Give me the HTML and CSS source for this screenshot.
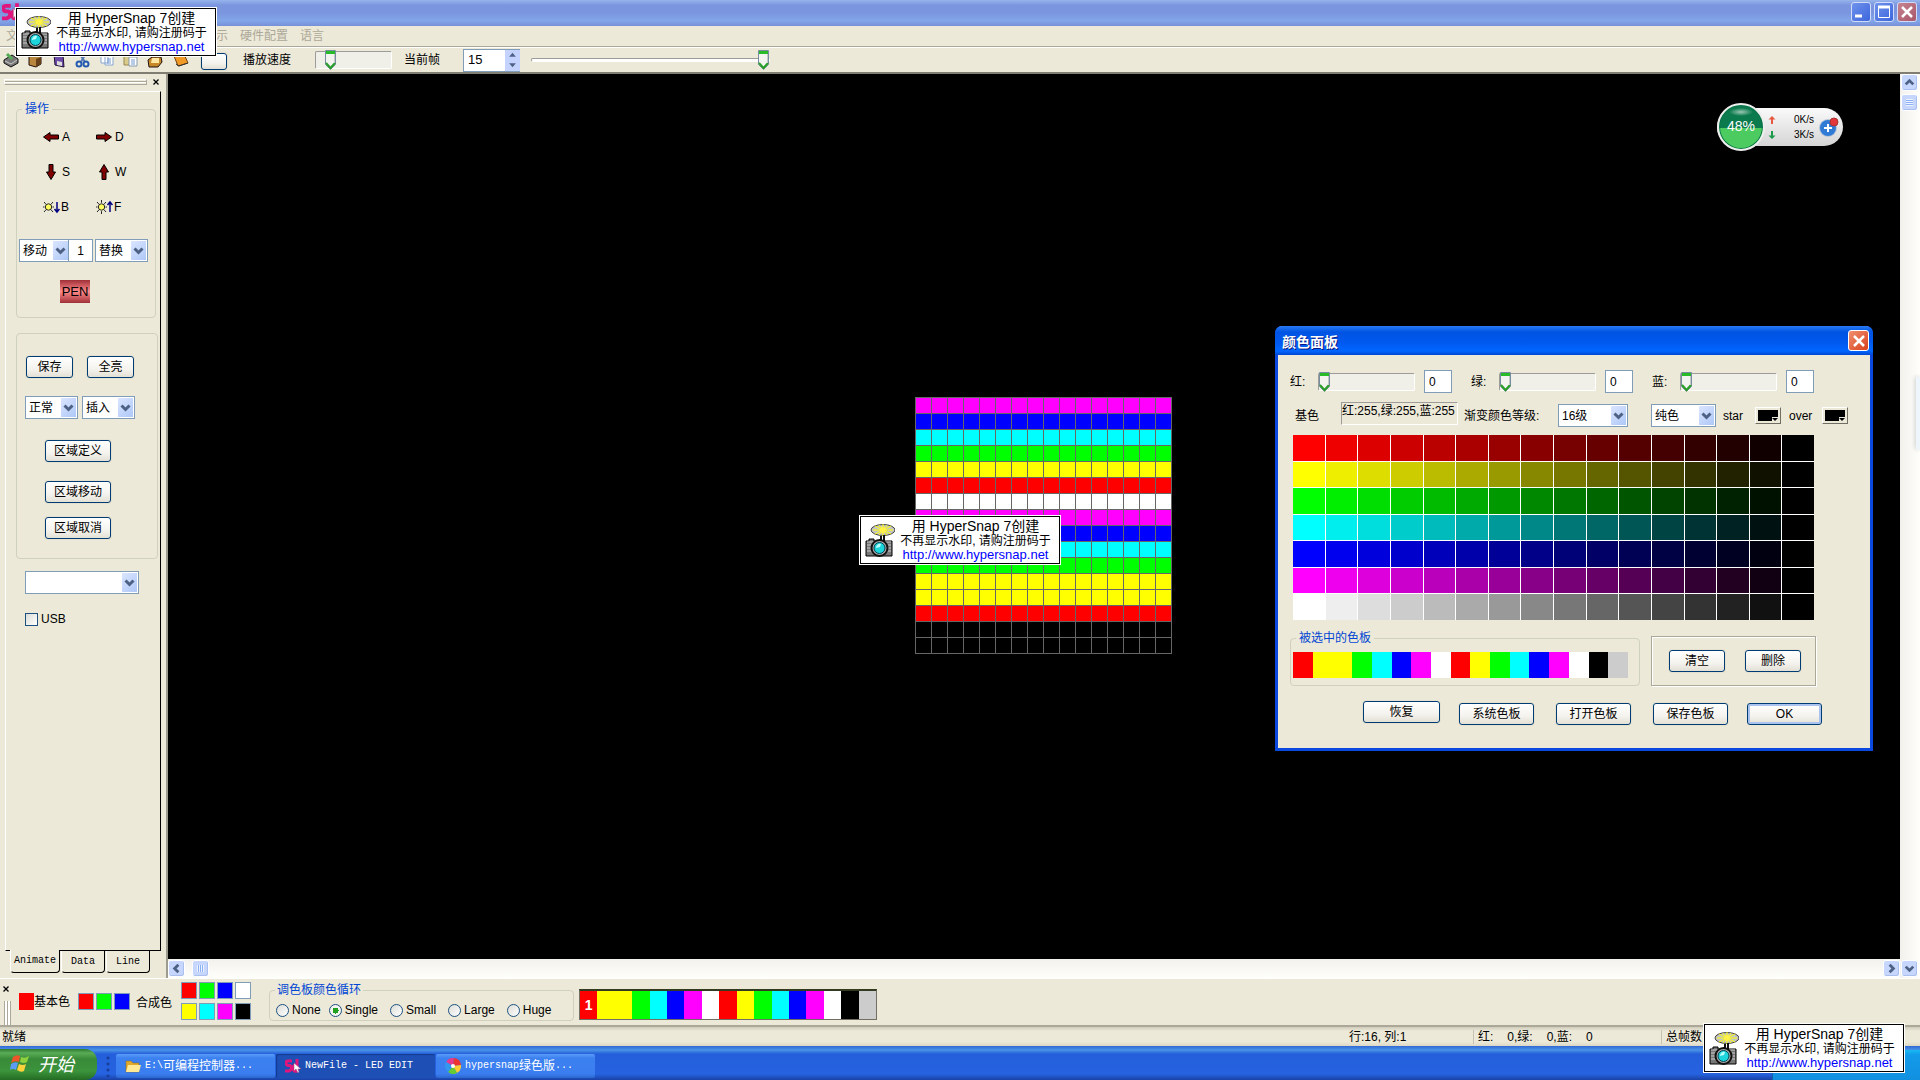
FILE: index.html
```html
<!DOCTYPE html>
<html lang="zh-CN">
<head>
<meta charset="utf-8">
<title>NewFile - LED EDIT</title>
<link rel="stylesheet" href="styles.css">
</head>
<body>
<svg class="defs" aria-hidden="true">
  <defs>
    <symbol id="camera" viewBox="0 0 30 36">
      <ellipse cx="18" cy="8" rx="12" ry="5.500" fill="#c4c4c4" stroke="#444"/>
      <path d="M18 2v12M10 4l16 8M26 4L10 12M8 8h20M14 3l8 10M22 3l-8 10" stroke="#ff0"/>
      <circle cx="18" cy="8" r="3" fill="#fff04a"/>
      <path d="M16 14v6M19 13v7" stroke="#111" stroke-width="2"/>
      <path d="M1 19h3v-2h5v2h18v15H1z" fill="#777" stroke="#000"/>
      <path d="M2 20h24M2 23h5M2 26h5M2 29h5M22 23h4M22 26h4M22 29h4" stroke="#ccc"/>
      <circle cx="14.500" cy="26" r="8" fill="#aaa" stroke="#111" stroke-width="2"/>
      <circle cx="14.500" cy="26" r="5.500" fill="#1cd6dc" stroke="#045"/>
      <path d="M11 26a4 4 0 0 1 5-4l-1 3z" fill="#bff"/>
    </symbol>
    <symbol id="logo" viewBox="0 0 16 16">
      <path d="M7 3H3Q1 3 1 5t2 2.500h2Q6.500 8 6.500 10T4 13H0M12 1v12M12 8q-4-2-4 2t4 3" fill="none" stroke="#e0167c" stroke-width="3"/>
      <path d="M9 5v8l2-2 2 4 1-1-1-3h3z" fill="#fff" stroke="#a04070" stroke-width=".5"/>
    </symbol>
    <symbol id="arrow" viewBox="0 0 16 10">
      <path d="M.5 5L7 .5V3h8.500v4H7v2.500z" fill="#800000" stroke="#000"/>
    </symbol>
    <symbol id="varrow" viewBox="0 0 10 16">
      <path d="M5 .5L.5 8H3v7.500h4V8h2.500z" fill="#800000" stroke="#000"/>
    </symbol>
    <symbol id="sun" viewBox="0 0 17 14">
      <path d="M5.500 0v14M0 7h11M1 2l9 10M10 2L1 12" stroke="#222"/>
      <circle cx="5.500" cy="7" r="4.200" fill="#ece9d8"/>
      <circle cx="5.500" cy="7" r="3.200" fill="#ffff60" stroke="#222"/>
      <path d="M14 2v10M11.500 5L14 2l2.500 3" fill="none" stroke="#000080" stroke-width="1.500"/>
    </symbol>
    <symbol id="sundown" viewBox="0 0 17 14">
      <path d="M0 7h11M1 2l9 10M10 2L1 12" stroke="#222"/>
      <circle cx="5.500" cy="7" r="4.200" fill="#ece9d8"/>
      <circle cx="5.500" cy="7" r="3.200" fill="#ffff60" stroke="#222"/>
      <path d="M14 2v10M11.500 9l2.500 3 2.500-3" fill="none" stroke="#000080" stroke-width="1.500"/>
    </symbol>
    <symbol id="x" viewBox="0 0 16 16"><path d="M3 3l10 10M13 3L3 13" stroke="currentColor" stroke-width="2.500"/></symbol>
    <symbol id="chev" viewBox="0 0 16 16"><path d="M4 6l4 4 4-4" fill="none" stroke="#4d6185" stroke-width="3"/></symbol>
  </defs>
</svg>

<header class="title">
  <svg class="title-logo"><use href="#logo"/></svg>
  <div class="caption-buttons">
    <button class="cap" aria-label="最小化"><svg viewBox="0 0 16 16"><path d="M2 12h7" stroke="#fff" stroke-width="3"/></svg></button>
    <button class="cap" aria-label="最大化"><svg viewBox="0 0 16 16"><path d="M2.500 3h11v10.500h-11z" fill="none" stroke="#fff"/><path d="M2 3h12" stroke="#fff" stroke-width="3"/></svg></button>
    <button class="cap cap-close" aria-label="关闭"><svg><use href="#x"/></svg></button>
  </div>
</header>
<nav class="menu"><span>文</span><span class="menu-view">示</span><span>硬件配置</span><span>语言</span></nav>
<div class="toolbar">
  <div class="tools">
    <svg viewBox="0 0 16 16"><path d="M1 8l8-5 6 4v4l-7 4-7-4z" fill="#777" stroke="#111"/><path d="M2 9l6 3 6-4" fill="none" stroke="#ccc"/><path d="M4 2l5 5" stroke="#5a5" stroke-width="3"/></svg>
    <svg viewBox="0 0 16 16"><path d="M2 4l8-2 4 3v7l-5 3-7-2z" fill="#b8863c" stroke="#211"/><path d="M9 7v8l5-3V5z" fill="#664018"/></svg>
    <svg viewBox="0 0 16 16"><path d="M3 2l9 1 1 12-9-2z" fill="#6b4aa8" stroke="#213"/><path d="M6 9l5 1v4l-5-1z" fill="#ddd"/></svg>
    <svg viewBox="0 0 16 16"><path d="M4 1l6 9M11 1L6 10" stroke="#5779b5" stroke-width="2"/><circle cx="4" cy="12" r="2.500" fill="none" stroke="#245bb0" stroke-width="2"/><circle cx="11" cy="12" r="2.500" fill="none" stroke="#245bb0" stroke-width="2"/></svg>
    <svg viewBox="0 0 16 16"><path d="M2 1h7v10H2zM6 4h8v9H6z" fill="#fff" stroke="#87a5cf"/><path d="M8 7h4M8 9h4M8 11h4" stroke="#7298cf"/></svg>
    <svg viewBox="0 0 16 16"><path d="M1 2h9v11H1z" fill="#d8cb8c" stroke="#99884c"/><path d="M6 5h8v9H6z" fill="#fff" stroke="#89a"/><path d="M8 8h4M8 10h4M8 12h4" stroke="#7298cf"/></svg>
    <svg viewBox="0 0 16 16"><path d="M1 8l4-3h9l1 5-4 5H2z" fill="#c68a28" stroke="#211"/><path d="M5 6h7v5H4z" fill="#ffe6a1"/></svg>
    <svg class="book" viewBox="0 0 16 16"><path d="M1 4l10-2 4 9-10 3z" fill="#f29a28" stroke="#73400c"/><path d="M3 12l3 2 9-3" fill="none" stroke="#333"/></svg>
    <button class="btn tool-button" aria-label="播放"></button>
  </div>
  <label class="speed-label" for="speed">播放速度</label>
  <input class="slider speed" id="speed" type="range" min="0" max="100" value="14">
  <label class="frame-label" for="frame">当前帧</label>
  <div class="spin">
    <input id="frame" type="text" value="15">
    <svg viewBox="0 0 15 22"><path d="M4 7l3.500-4L11 7zM4 14l3.500 4 3.500-4z" fill="#4d6185"/></svg>
  </div>
  <input class="slider thin frame-slider" type="range" min="0" max="100" value="100" aria-label="当前帧">
</div>

<main class="main">
  <aside class="side">
    <div class="grip-row"><div class="grip"></div><button class="mini-x" aria-label="关闭"><svg><use href="#x"/></svg></button></div>
    <div class="page">
      <fieldset class="group ops">
        <legend>操作</legend>
        <div class="keys">
          <span><svg class="ar"><use href="#arrow"/></svg>A</span><span><svg class="ar flip"><use href="#arrow"/></svg>D</span>
          <span><svg class="va flip"><use href="#varrow"/></svg>S</span><span><svg class="va"><use href="#varrow"/></svg>W</span>
          <span><svg class="sn"><use href="#sundown"/></svg>B</span><span><svg class="sn"><use href="#sun"/></svg>F</span>
        </div>
        <div class="move-row">
          <select class="combo" aria-label="方式"><option>移动</option></select>
          <input class="box step" type="text" value="1" aria-label="步长">
          <select class="combo" aria-label="模式"><option>替换</option></select>
        </div>
        <button class="pen">PEN</button>
      </fieldset>
      <div class="group edit">
        <div class="pair"><button class="btn">保存</button><button class="btn">全亮</button></div>
        <div class="combos">
          <select class="combo" aria-label="显示方式"><option>正常</option></select>
          <select class="combo" aria-label="编辑方式"><option>插入</option></select>
        </div>
        <div class="areas"><button class="btn">区域定义</button><button class="btn area-move">区域移动</button><button class="btn">区域取消</button></div>
      </div>
      <select class="combo device" aria-label="设备"><option></option></select>
      <label class="usb"><input type="checkbox">USB</label>
    </div>
    <div class="tabs"><button class="tab on">Animate</button><button class="tab">Data</button><button class="tab">Line</button></div>
  </aside>
  <section class="work">
    <div class="canvas"><div class="led" id="led"></div></div>
    <div class="vbar">
      <button class="sb" aria-label="向上"><svg class="up"><use href="#chev"/></svg></button>
      <div class="sb vthumb"></div>
      <button class="sb vdown" aria-label="向下"><svg><use href="#chev"/></svg></button>
    </div>
    <div class="hbar">
      <button class="sb" aria-label="向左"><svg class="left"><use href="#chev"/></svg></button>
      <div class="sb hthumb"></div>
      <button class="sb hright" aria-label="向右"><svg class="right"><use href="#chev"/></svg></button>
    </div>
  </section>
</main>

<section class="palette">
  <div class="pal-handle"><button class="mini-x" aria-label="关闭"><svg><use href="#x"/></svg></button><div class="vgrip"></div></div>
  <div class="basic"><i class="sw red bare"></i><span>基本色</span></div>
  <div class="rgb"><i class="sw red"></i><i class="sw green"></i><i class="sw blue"></i></div>
  <span class="mix-label">合成色</span>
  <div class="mix">
    <i class="sw red"></i><i class="sw green"></i><i class="sw blue"></i><i class="sw white"></i>
    <i class="sw yellow"></i><i class="sw cyan"></i><i class="sw magenta"></i><i class="sw black"></i>
  </div>
  <fieldset class="group cycle">
    <legend>调色板颜色循环</legend>
    <div class="radios">
      <label><input type="radio" name="cycle">None</label>
      <label><input type="radio" name="cycle" checked>Single</label>
      <label><input type="radio" name="cycle">Small</label>
      <label><input type="radio" name="cycle">Large</label>
      <label><input type="radio" name="cycle">Huge</label>
    </div>
  </fieldset>
  <div class="strip framed" id="stripBar"></div>
</section>

<footer class="status">
  <span class="ready">就绪</span>
  <span class="cell pos">行:16, 列:1</span>
  <span class="cell rgbval"><span>红:</span><span>0,绿:</span><span>0,蓝:</span><span>0</span></span>
  <span class="cell frames">总帧数</span>
</footer>

<div class="taskbar">
  <button class="start">
    <svg viewBox="0 0 20 20"><path d="M3 4q4-3 7-1L9 9Q5 7 1 10z" fill="#f0552a"/><path d="M11 4q4 2 8-1l-2 6q-3 2-7 0z" fill="#8fd13c"/><path d="M1 11q4-3 7-1l-2 7q-3-2-6 0z" fill="#5c9cf5"/><path d="M9 11q4 2 7 0l-2 7q-3 2-7-1z" fill="#ffd23c"/></svg>
    <span>开始</span>
  </button>
  <div class="dots"></div>
  <button class="task"><svg viewBox="0 0 16 16"><path d="M1 3h5l2 2h6v9H1z" fill="#e0a92c" stroke="#8a6414" stroke-width=".5"/><path d="M1 14L3 7h13l-2 7z" fill="#ffe994"/></svg><span class="mono">E:\</span>可编程控制器<span class="mono">...</span></button>
  <button class="task active"><svg><use href="#logo"/></svg><span class="mono">NewFile - LED EDIT</span></button>
  <button class="task"><svg viewBox="0 0 16 16"><path d="M8 8L1 4A8 8 0 0 1 9 0z" fill="#e83a8c"/><path d="M8 8l1-8a8 8 0 0 1 7 7z" fill="#e33"/><path d="M8 8l8-1a8 8 0 0 1-4 8z" fill="#fc3"/><path d="M8 8l4 7a8 8 0 0 1-9-1z" fill="#6c3"/><path d="M8 8l-5 6A8 8 0 0 1 1 4z" fill="#39e"/><circle cx="8" cy="8" r="2" fill="#fff"/></svg><span class="mono">hypersnap</span>绿色版<span class="mono">...</span></button>
  <div class="tray"></div>
</div>

<div class="meter">
  <div class="ball">48%</div>
  <div class="arrows"><svg viewBox="0 0 8 8"><path d="M4 0l3.500 3.500H5V8H3V3.500H.5z" fill="#e8573f"/></svg><svg viewBox="0 0 8 8"><path d="M4 8L.5 4.500H3V0h2v4.500h2.500z" fill="#1f9a4c"/></svg></div>
  <div class="rates"><span>0K/s</span><span>3K/s</span></div>
  <svg class="plus" viewBox="0 0 20 20"><circle cx="9" cy="11" r="9" fill="#b8c4d4"/><circle cx="9" cy="11" r="8" fill="#2f7bd6"/><path d="M9 7v8M5 11h8" stroke="#fff" stroke-width="2"/><circle cx="15" cy="5" r="4" fill="#e2383c" stroke="#a33"/></svg>
</div>
<div class="edge-tip"></div>

<section class="dialog" role="dialog" aria-label="颜色面板">
  <header class="dlg-title"><h2>颜色面板</h2><button class="dlg-close" aria-label="关闭"><svg><use href="#x"/></svg></button></header>
  <div class="dlg-body">
    <div class="channels">
      <div><label for="r">红:</label><input class="slider" type="range" value="0" aria-label="红"><input class="box" id="r" type="text" value="0"></div>
      <div><label for="g">绿:</label><input class="slider" type="range" value="0" aria-label="绿"><input class="box" id="g" type="text" value="0"></div>
      <div><label for="b">蓝:</label><input class="slider" type="range" value="0" aria-label="蓝"><input class="box" id="b" type="text" value="0"></div>
    </div>
    <div class="options">
      <span class="base-label">基色</span>
      <output class="sunken">红:255,绿:255,蓝:255</output>
      <label class="level-label" for="level">渐变颜色等级:</label>
      <select class="combo level" id="level"><option>16级</option></select>
      <select class="combo solid" aria-label="颜色类型"><option>纯色</option></select>
      <span class="star">star</span><button class="pick" aria-label="star"><i></i></button>
      <span class="over">over</span><button class="pick" aria-label="over"><i></i></button>
    </div>
    <div class="shades" id="shades"></div>
    <div class="chosen">
      <fieldset class="group chosen-box"><legend>被选中的色板</legend><div class="strip" id="stripDialog"></div></fieldset>
      <div class="etched"><button class="btn">清空</button><button class="btn">删除</button></div>
    </div>
    <div class="actions">
      <button class="btn restore">恢复</button><button class="btn">系统色板</button><button class="btn">打开色板</button><button class="btn">保存色板</button><button class="btn ok">OK</button>
    </div>
  </div>
</section>

<div class="mark mark-tl"><svg><use href="#camera"/></svg><div><b>用 HyperSnap 7创建</b><span>不再显示水印, 请购注册码于</span><a href="http://www.hypersnap.net">http://www.hypersnap.net</a></div></div>
<div class="mark mark-mid"><svg><use href="#camera"/></svg><div><b>用 HyperSnap 7创建</b><span>不再显示水印, 请购注册码于</span><a href="http://www.hypersnap.net">http://www.hypersnap.net</a></div></div>
<div class="mark mark-br"><svg><use href="#camera"/></svg><div><b>用 HyperSnap 7创建</b><span>不再显示水印, 请购注册码于</span><a href="http://www.hypersnap.net">http://www.hypersnap.net</a></div></div>
<script src="app.js"></script>
</body>
</html>
```
FILE: styles.css
```css
* { box-sizing: border-box; }
body {
  margin: 0;
  height: 100vh;
  display: flex;
  flex-direction: column;
  position: relative;
  overflow: hidden;
  background: #ece9d8;
  color: #000;
  font: 12px/14px "Liberation Sans", "Noto Sans CJK SC", sans-serif;
}
button, input, select { font: inherit; color: inherit; margin: 0; padding: 0; }
button { border: 0; background: none; }
svg { display: block; flex: none; }
.defs { position: absolute; width: 0; height: 0; }
.mono { font: 10px/14px "Liberation Mono", monospace; }

/* shared controls */
.btn {
  height: 22px;
  border: 1px solid #003c74;
  border-radius: 3px;
  background: linear-gradient(#fff, #f4f3ee 60%, #e3e0d5);
  box-shadow: 0 0 0 1px #e6e1cf;
}
.box { border: 1px solid #7f9db9; background: #fff; height: 23px; border-radius: 0; }
.combo {
  appearance: none;
  height: 23px;
  border: 1px solid #7f9db9;
  border-radius: 0;
  padding: 0 18px 0 3px;
  background:
    url("data:image/svg+xml,%3Csvg xmlns='http://www.w3.org/2000/svg' width='15' height='19'%3E%3Cpath d='M3.500 7.500l4 4 4-4' fill='none' stroke='%234d6185' stroke-width='3'/%3E%3C/svg%3E") right 1px top 1px no-repeat,
    linear-gradient(135deg, #dbe5ff, #aec8f7) right 1px top 1px / 15px 19px no-repeat,
    #fff;
}
.slider { appearance: none; height: 22px; background: none; }
.slider::-webkit-slider-runnable-track {
  height: 18px;
  border: 1px solid #fff;
  border-top-color: #9d9c99;
  border-left-color: #9d9c99;
  border-radius: 2px;
  background: #f0f0e8;
}
.slider::-webkit-slider-thumb {
  appearance: none;
  width: 11px;
  height: 20px;
  margin-top: -2px;
  background: url("data:image/svg+xml,%3Csvg xmlns='http://www.w3.org/2000/svg' width='11' height='20'%3E%3Cpath d='M.5.5h10v14l-5 5-5-5z' fill='%23f3f3ef' stroke='%23778c9e'/%3E%3Cpath d='M1 1h9v3H1z' fill='%2328bb28'/%3E%3Cpath d='M1 13l4.500 5 4.500-5' fill='none' stroke='%2328a028' stroke-width='2'/%3E%3Cpath d='M9.500 4v9' stroke='%23c4c8c8'/%3E%3C/svg%3E") no-repeat;
}
.slider.thin::-webkit-slider-runnable-track { height: 4px; background: #fff; }
.slider.thin::-webkit-slider-thumb { margin-top: -9px; }
.group { margin: 0; padding: 0; min-width: 0; border: 1px solid #d0d0bf; border-radius: 4px; }
.group legend { color: #0046d5; padding: 0 3px; margin-left: 5px; line-height: 14px; }
.mini-x { width: 10px; height: 10px; }
.mini-x svg { width: 8px; height: 8px; }

/* window frame */
.title { height: 26px; flex: none; display: flex; justify-content: space-between; padding: 2px 1px 2px 2px; background: linear-gradient(#96b4ec, #7b96df 20%, #7b96df 50%, #82a6e8 80%, #7690d8); }
.title-logo { width: 20px; height: 20px; }
.caption-buttons { display: flex; gap: 3px; padding-right: 2px; }
.cap { width: 20px; height: 20px; border: 1px solid #d0dcf8; border-radius: 3px; background: linear-gradient(135deg, #6f92ec, #3c66dc); color: #fff; display: grid; place-items: center; }
.cap svg { width: 16px; height: 16px; }
.cap-close { background: linear-gradient(135deg, #c68490, #a8566a); }
.menu { height: 21px; flex: none; display: flex; align-items: center; gap: 12px; padding: 0 6px; color: #aca899; border-bottom: 1px solid #aca899; }
.menu-view { margin-left: 186px; }
.toolbar { height: 27px; flex: none; display: flex; align-items: center; border-top: 1px solid #fff; border-bottom: 2px solid #807e73; }
.tools { display: flex; align-items: center; gap: 8px; width: 243px; padding-left: 3px; }
.tools svg { width: 16px; height: 16px; }
.tools .book { margin-left: 2px; }
.tool-button { width: 26px; height: 17px; margin: 3px 0 0 4px; }
.speed-label { width: 72px; }
.speed { width: 77px; }
.frame-label { margin-left: 12px; width: 59px; }
.spin { width: 57px; height: 23px; display: flex; border: 1px solid #7f9db9; border-right: 0; background: #fff; }
.spin input { width: 41px; border: 0; padding-left: 4px; background: none; font-size: 13px; }
.spin svg { width: 15px; height: 21px; background: #c3d3fd; }
.frame-slider { width: 239px; margin-left: 11px; }
.main { flex: 1; min-height: 0; display: flex; }

/* side panel */
.side { width: 168px; flex: none; display: flex; flex-direction: column; border-right: 2px solid #9d9b8f; padding-bottom: 4px; }
.grip-row { height: 17px; display: flex; align-items: center; gap: 5px; padding: 0 4px 2px; }
.grip { width: 144px; height: 6px; border: 1px solid #fff; border-right-color: #aca899; border-bottom-color: #aca899; background: linear-gradient(#aca899 50%, #fff 50%) 0 1px / 100% 2px no-repeat; }
.page { flex: 1; margin: 0 5px; border: 1px solid #fff; border-right-color: #000; border-bottom-color: #000; display: flex; flex-direction: column; align-items: flex-start; }
.ops { width: 140px; margin: 10px 0 0 10px; padding: 3px 0 14px; }
.keys { display: grid; grid-template-columns: 53px 53px; grid-auto-rows: 35px; padding-left: 26px; }
.keys span { display: flex; align-items: center; gap: 3px; }
.ar { width: 16px; height: 10px; }
.va { width: 10px; height: 16px; margin: 0 3px; }
.sn { width: 17px; height: 14px; }
.keys span:nth-child(n+5) { gap: 1px; }
.flip { transform: rotate(180deg); }
.move-row { display: flex; margin: 15px 0 18px 2px; }
.move-row .combo { width: 51px; }
.move-row .step { width: 25px; margin: 0 2px 0 -2px; text-align: center; }
.move-row .combo:last-child { width: 53px; }
.pen { display: block; width: 30px; height: 23px; margin-left: 43px; font-size: 13px; background: linear-gradient(#a03038, #ff8a8a 50%, #a03038); }
.edit { width: 142px; margin: 15px 0 0 10px; padding: 22px 0 19px; }
.pair { display: flex; gap: 14px; margin-left: 9px; }
.pair .btn { width: 47px; }
.combos { display: flex; gap: 4px; margin: 18px 0 21px 8px; }
.combos .combo { width: 53px; }
.areas { display: flex; flex-direction: column; gap: 14px; margin-left: 28px; }
.areas .btn { width: 66px; }
.area-move { margin-top: 5px; }
.device { width: 114px; margin: 12px 0 18px 19px; }
.usb { display: flex; align-items: center; gap: 3px; margin-left: 19px; }
.usb input { appearance: none; width: 13px; height: 13px; border: 1px solid #1c5180; background: linear-gradient(135deg, #dcdcd7, #fff); }
.tabs { display: flex; gap: 1px; padding-left: 10px; height: 23px; }
.tab { width: 44px; height: 22px; font: 10px/14px "Liberation Mono", monospace; border: 1px solid #000; border-top: 0; border-left-color: #fff; border-radius: 0 0 4px 4px; }
.tab.on { width: 50px; height: 23px; margin-top: -1px; background: #ece9d8; }

/* work area */
.work { flex: 1; min-width: 0; display: grid; grid-template: 1fr 19px / 1fr 20px; background: #ece9d8; }
.canvas { background: #000; display: flex; align-items: center; justify-content: center; padding: 18px 0 0 18px; }
.led { display: grid; grid-template-columns: repeat(16, 15px); grid-auto-rows: 15px; gap: 1px; padding: 1px; background: #666; }
.vbar { grid-row: 1 / 3; grid-column: 2; display: flex; flex-direction: column; padding: 0 2px 1px 1px; background: linear-gradient(90deg, #f3f1ec, #fefefb); }
.hbar { display: flex; padding: 1px 0; background: linear-gradient(#f3f1ec, #fefefb); }
.sb { width: 17px; height: 17px; flex: none; border: 1px solid #fff; border-radius: 3px; background: #c6d6fd; box-shadow: inset -1px -1px #a9bff0; }
.sb svg { width: 15px; height: 15px; }
.up { transform: rotate(180deg); }
.left { transform: rotate(90deg); }
.right { transform: rotate(-90deg); }
.vthumb { margin-top: 3px; background: repeating-linear-gradient(#eef4fe 0 1px, #8cb0f8 1px 2px) 4px 4px / 7px 7px no-repeat, #c6d6fd; }
.hthumb { margin-left: 7px; background: repeating-linear-gradient(90deg, #eef4fe 0 1px, #8cb0f8 1px 2px) 4px 4px / 7px 7px no-repeat, #c6d6fd; }
.vdown { margin-top: auto; }
.hright { margin-left: auto; }

/* palette bar */
.palette { height: 49px; flex: none; display: flex; align-items: flex-start; border-top: 1px solid #fff; border-bottom: 2px solid #aca899; }
.pal-handle { width: 19px; padding: 4px 2px; }
.vgrip { width: 7px; height: 24px; margin: 4px 2px; border: solid #aca899; border-width: 0 1px; background: linear-gradient(90deg, #fff 2px, #aca899 2px 3px, #fff 3px); }
.sw { display: block; width: 16px; height: 17px; border: 1px solid #7f9db9; }
.bare { border: 0; }
.red { background: #f00; } .green { background: #0f0; } .blue { background: #00f; } .white { background: #fff; }
.yellow { background: #ff0; } .cyan { background: #0ff; } .magenta { background: #f0f; } .black { background: #000; }
.basic { display: flex; align-items: center; width: 59px; padding-top: 14px; white-space: nowrap; }
.basic .sw { width: 15px; }
.rgb { display: flex; gap: 2px; width: 58px; padding-top: 14px; }
.mix-label { padding-top: 17px; width: 45px; }
.mix { display: grid; grid-template-columns: repeat(4, 16px); gap: 4px 2px; padding-top: 3px; width: 88px; }
.cycle { width: 305px; margin-top: 4px; padding-bottom: 1px; }
.cycle legend { padding: 0 2px; }
.radios { display: flex; gap: 12px; padding: 6px 0 2px 6px; }
.radios label { display: flex; align-items: center; gap: 3px; }
.radios label:first-child { margin-right: -4px; }
.radios input { appearance: none; width: 13px; height: 13px; border: 1px solid #1c5180; border-radius: 50%; background: linear-gradient(135deg, #dcdcd7, #fff); }
.radios input:checked { background: radial-gradient(circle, #21a121 3px, #f4f4f0 3px); }
.strip { display: grid; grid-template-columns: repeat(17, 1fr); }
.strip i { display: block; color: #fff; font: bold 14px/28px "Liberation Sans", sans-serif; text-align: center; }
.framed { width: 298px; height: 31px; margin: 10px 0 0 5px; border: 1px solid #716f64; border-top: 2px solid #323a20; }

/* status */
.status { height: 19px; flex: none; display: flex; align-items: center; padding: 0 15px 0 2px; background: linear-gradient(#cfccba, #ece9d8 4px, #ece9d8 15px, #dcd8c4); }
.ready { flex: 1; }
.pos { width: 124px; }
.rgbval { width: 188px; display: flex; gap: 14px; border-left: 1px solid #c5c2b2; padding-left: 4px; }
.frames { width: 244px; border-left: 1px solid #c5c2b2; padding-left: 4px; }

/* taskbar */
.taskbar { height: 34px; flex: none; display: flex; align-items: flex-end; background: linear-gradient(#3168d5, #4993e6 4px, #245edb 8px, #2663e0 28px, #1941a5); color: #fff; }
.start { width: 97px; height: 31px; display: flex; align-items: center; gap: 8px; padding: 0 0 3px 10px; border-radius: 0 12px 12px 0; background: linear-gradient(#2f7a2f, #5aac56 4px, #388a38 10px, #3c943c 22px, #236b23); font: italic 18px/22px "Noto Sans CJK SC", sans-serif; }
.start svg { width: 20px; height: 20px; }
.dots { width: 19px; height: 22px; margin-bottom: 3px; background: radial-gradient(circle, #173f9c 1px, transparent 2px) 8px 0 / 6px 6px; background-clip: content-box; padding: 0 4px 0 8px; }
.task { width: 159px; height: 24px; margin: 0 1px 2px 0; display: flex; align-items: center; padding-left: 9px; border-radius: 2px; white-space: pre; background: linear-gradient(#5a9cf8, #3c81f0 4px, #3a7df0 20px, #2b66cc); }
.task svg { width: 16px; height: 16px; margin-right: 4px; }
.task.active { background: #1e4fb5; box-shadow: inset 1px 1px 1px #123a8c; }
.tray { width: 148px; height: 30px; margin-left: auto; border-left: 1px solid #16a; background: linear-gradient(#19b9f2, #129bea 5px, #1290e0); }

/* floating traffic meter */
.meter { position: absolute; top: 108px; right: 77px; width: 126px; height: 38px; display: flex; align-items: center; border-radius: 19px; background: linear-gradient(#fafafa, #d5d5d5); font-size: 10px; }
.ball { width: 48px; height: 48px; margin: -5px 3px -5px 0; border: 2px solid #eee; border-radius: 50%; box-shadow: inset 0 0 0 1px #0a7348; background: radial-gradient(ellipse 12px 4px at 50% 7px, #9cc8b4, transparent), linear-gradient(#0b7a4c 52%, #4ccb60 52%); color: #fff; font-size: 14px; line-height: 42px; text-align: center; }
.arrows { display: grid; gap: 7px; }
.arrows svg { width: 8px; height: 8px; }
.rates { display: grid; gap: 1px; width: 38px; text-align: right; }
.plus { width: 20px; height: 20px; margin-left: 5px; }
.edge-tip { position: absolute; right: 0; top: 377px; width: 4px; height: 72px; background: #eef6fc; box-shadow: -1px 0 4px #ccc; }

/* color dialog */
.dialog { position: absolute; top: 326px; right: 47px; width: 598px; border: 3px solid #0a48e0; border-top: 0; border-radius: 7px 7px 0 0; background: #ece9d8; }
.dlg-title { height: 29px; margin: 0 -3px; padding: 0 4px 0 7px; display: flex; align-items: center; justify-content: space-between; border-radius: 7px 7px 0 0; background: linear-gradient(#2a7af5, #0054e3 6px, #0058ee 16px, #0066ff 25px, #0048d0); color: #fff; }
.dlg-title h2 { margin: 0; font: bold 14px/16px "Noto Sans CJK SC", sans-serif; text-shadow: 1px 1px #0a1883; }
.dlg-close { width: 21px; height: 21px; border: 1px solid #fff; border-radius: 3px; background: linear-gradient(135deg, #f09070, #d8401c); display: grid; place-items: center; }
.dlg-close svg { width: 16px; height: 16px; }
.dlg-body { padding: 15px 12px 23px; background: #ece9d8; }
.channels { display: grid; grid-template-columns: repeat(3, 181px); }
.channels div { display: flex; align-items: center; }
.channels label { width: 28px; }
.channels .slider { width: 97px; }
.channels .box { width: 28px; margin-left: 9px; padding-left: 4px; }
.options { display: flex; align-items: center; height: 23px; margin: 11px 0 8px 5px; white-space: nowrap; }
.base-label { width: 46px; }
.sunken { width: 117px; height: 23px; margin: -4px 6px 0 0; line-height: 16px; border: 1px solid #fff; border-top-color: #9d9c99; border-left-color: #9d9c99; }
.level-label { width: 94px; }
.level { width: 70px; }
.solid { width: 65px; margin-left: 23px; }
.star { margin-left: 7px; width: 32px; }
.over { margin-left: 8px; width: 33px; }
.pick { width: 26px; height: 17px; padding: 2px; border: 1px solid #716f64; border-top-color: #fff; border-left-color: #fff; }
.pick i { display: block; height: 11px; background: linear-gradient(#ece9d8, #ece9d8) right bottom / 6px 4px no-repeat, #000; position: relative; }
.pick i::after { content: ""; position: absolute; right: 0; bottom: 0; border: 3px solid transparent; border-top-color: #000; border-bottom: 0; }
.shades { display: grid; grid-template-columns: repeat(16, 1fr); grid-auto-rows: 1fr; gap: 1px; width: 521px; height: 185px; margin-left: 3px; background: #fff; }
.chosen { display: flex; align-items: flex-end; gap: 11px; margin-top: 11px; }
.chosen-box { width: 350px; height: 55px; }
.chosen-box .strip { width: 335px; height: 26px; margin: 7px 0 0 2px; }
.etched { width: 165px; height: 50px; display: flex; gap: 20px; align-items: center; padding-left: 17px; border: 1px solid #aca899; box-shadow: 1px 1px #fff, inset 1px 1px #fff; }
.etched .btn { width: 56px; }
.actions { display: flex; gap: 22px; margin: 17px 0 0 73px; }
.actions .btn { width: 75px; }
.actions .restore { width: 77px; margin: -2px -3px 0 0; }
.actions .ok { margin-left: -3px; box-shadow: inset 0 0 0 2px #a9c2ee; }

/* stamps */
.mark { position: absolute; z-index: 5; width: 202px; height: 50px; padding-left: 5px; display: flex; align-items: center; gap: 3px; background: #fff; border: 1px solid #fff; box-shadow: inset 0 0 0 1px #000; }
.mark svg { width: 30px; height: 36px; }
.mark div { flex: 1; display: flex; flex-direction: column; align-items: center; padding-right: 7px; white-space: nowrap; }
.mark b { font-weight: 400; font-size: 14px; line-height: 16px; }
.mark span { line-height: 14px; }
.mark a { font-size: 13px; line-height: 14px; color: #00f; text-decoration: none; }
.mark-tl { top: 7px; left: 15px; }
.mark-mid { top: 50%; left: 50%; transform: translate(-50%, -50%); }
.mark-br { bottom: 7px; right: 15px; }
```
FILE: app.js
```js
const fill = (id, colors) => {
  const host = document.getElementById(id);
  colors.forEach((c) => {
    const cell = document.createElement("i");
    cell.style.background = c;
    host.append(cell);
  });
  return host;
};

// LED matrix: one colour per row, 16 columns
const rows = ["#f0f", "#00f", "#0ff", "#0f0", "#ff0", "#f00", "#fff", "#f0f",
  "#00f", "#0ff", "#0f0", "#ff0", "#ff0", "#f00", "#000", "#000"];
fill("led", rows.flatMap((c) => Array(16).fill(c)));

// shade table: seven hues, each fading to black in 16 steps
const hues = [[1, 0, 0], [1, 1, 0], [0, 1, 0], [0, 1, 1], [0, 0, 1], [1, 0, 1], [1, 1, 1]];
fill("shades", hues.flatMap((h) =>
  Array.from({ length: 16 }, (_, i) => `rgb(${h.map((v) => v * (255 - 17 * i)).join(",")})`)));

const picked = ["#f00", "#ff0", "#ff0", "#0f0", "#0ff", "#00f", "#f0f", "#fff", "#f00",
  "#ff0", "#0f0", "#0ff", "#00f", "#f0f", "#fff", "#000", "#ccc"];
fill("stripDialog", picked);
fill("stripBar", picked).firstElementChild.textContent = "1";
```
